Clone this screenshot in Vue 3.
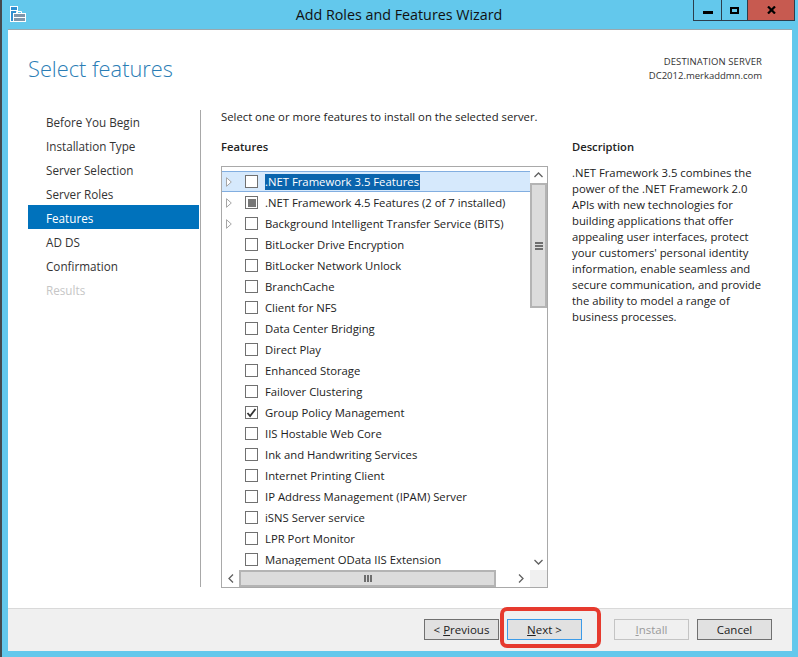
<script setup>
const steps = [
  { label: 'Before You Begin' },
  { label: 'Installation Type' },
  { label: 'Server Selection' },
  { label: 'Server Roles' },
  { label: 'Features', active: true },
  { label: 'AD DS' },
  { label: 'Confirmation' },
  { label: 'Results', disabled: true }
]
const features = [
  { label: '.NET Framework 3.5 Features', expand: true, selected: true },
  { label: '.NET Framework 4.5 Features (2 of 7 installed)', expand: true, state: 'partial' },
  { label: 'Background Intelligent Transfer Service (BITS)', expand: true },
  { label: 'BitLocker Drive Encryption' },
  { label: 'BitLocker Network Unlock' },
  { label: 'BranchCache' },
  { label: 'Client for NFS' },
  { label: 'Data Center Bridging' },
  { label: 'Direct Play' },
  { label: 'Enhanced Storage' },
  { label: 'Failover Clustering' },
  { label: 'Group Policy Management', state: 'checked' },
  { label: 'IIS Hostable Web Core' },
  { label: 'Ink and Handwriting Services' },
  { label: 'Internet Printing Client' },
  { label: 'IP Address Management (IPAM) Server' },
  { label: 'iSNS Server service' },
  { label: 'LPR Port Monitor' },
  { label: 'Management OData IIS Extension' }
]
const description = [
  '.NET Framework 3.5 combines the',
  'power of the .NET Framework 2.0',
  'APIs with new technologies for',
  'building applications that offer',
  'appealing user interfaces, protect',
  "your customers' personal identity",
  'information, enable seamless and',
  'secure communication, and provide',
  'the ability to model a range of',
  'business processes.'
]
</script>

<template>
  <div class="window">
    <header class="titlebar">
      <div class="app-icon">
        <svg width="16" height="16" viewBox="0 0 16 16">
          <rect x="0.5" y="0.5" width="7" height="15" fill="#2f8fd0" stroke="#fff" />
          <path d="M0.5 4.5h7" stroke="#fff" />
          <path d="M6.5 7.5V5.5h5v2" fill="none" stroke="#fff" />
          <rect x="3.5" y="7.5" width="12" height="8" fill="#7e96ab" stroke="#fff" />
          <path d="M3.5 11.5h12" stroke="#fff" />
        </svg>
      </div>
      <div class="title">Add Roles and Features Wizard</div>
      <div class="controls">
        <div class="ctl ctl-min"><span class="min-glyph"></span></div>
        <div class="ctl ctl-max"><span class="max-glyph"></span></div>
        <div class="ctl ctl-close">
          <svg width="9" height="8" viewBox="0 0 9 8"><path d="M1 .5l7 7M8 .5l-7 7" stroke="#000" stroke-width="2.2" /></svg>
        </div>
      </div>
    </header>

    <div class="client">
      <div class="body">
        <div class="head">
          <h1>Select features</h1>
          <div class="dest">
            <div class="dest-caption">DESTINATION SERVER</div>
            <div>DC2012.merkaddmn.com</div>
          </div>
        </div>

        <div class="columns">
          <nav class="steps">
            <div
              v-for="s in steps"
              :key="s.label"
              class="step"
              :class="{ active: s.active, disabled: s.disabled }"
            >{{ s.label }}</div>
          </nav>

          <main class="main">
            <p class="intro">Select one or more features to install on the selected server.</p>
            <div class="panes">
              <section class="features">
                <h2>Features</h2>
                <div class="listbox">
                  <div class="list-top">
                    <div class="list-wrap">
                      <div class="list">
                        <div
                          v-for="f in features"
                          :key="f.label"
                          class="row"
                          :class="{ selected: f.selected }"
                        >
                          <span class="arrow">
                            <svg v-if="f.expand" width="6" height="10" viewBox="0 0 6 10"><path d="M.5.7L5.3 5 .5 9.3z" fill="#fff" stroke="#a6a6a6" /></svg>
                          </span>
                          <span class="check" :class="f.state">
                            <svg v-if="f.state === 'checked'" width="11" height="10" viewBox="0 0 11 10"><path d="M1.5 5l2.6 3L9.5 1" fill="none" stroke="#333" stroke-width="1.8" /></svg>
                          </span>
                          <span class="label">{{ f.label }}</span>
                        </div>
                      </div>
                    </div>
                    <div class="vscroll">
                      <div class="sbtn-v">
                        <svg width="9" height="6" viewBox="0 0 9 6"><path d="M.5 5L4.5 1l4 4" fill="none" stroke="#606060" stroke-width="1.3" /></svg>
                      </div>
                      <div class="vthumb"><span class="grip-h"></span></div>
                      <div class="vtrack"></div>
                      <div class="sbtn-v">
                        <svg width="9" height="6" viewBox="0 0 9 6"><path d="M.5 1l4 4 4-4" fill="none" stroke="#606060" stroke-width="1.3" /></svg>
                      </div>
                    </div>
                  </div>
                  <div class="hscroll">
                    <div class="sbtn-h">
                      <svg width="6" height="9" viewBox="0 0 6 9"><path d="M5 .5l-4 4 4 4" fill="none" stroke="#606060" stroke-width="1.3" /></svg>
                    </div>
                    <div class="hthumb"><span class="grip-v"></span></div>
                    <div class="htrack"></div>
                    <div class="sbtn-h sbtn-right">
                      <svg width="6" height="9" viewBox="0 0 6 9"><path d="M1 .5l4 4-4 4" fill="none" stroke="#606060" stroke-width="1.3" /></svg>
                    </div>
                    <div class="corner"></div>
                  </div>
                </div>
              </section>
              <aside class="description">
                <h2>Description</h2>
                <div class="desc-text">
                  <div v-for="line in description" :key="line">{{ line }}</div>
                </div>
              </aside>
            </div>
          </main>
        </div>
      </div>

      <footer class="footer">
        <button class="btn"><span>&lt; <u>P</u>revious</span></button>
        <button class="btn btn-next"><span><u>N</u>ext &gt;</span></button>
        <button class="btn btn-install" disabled><span><u>I</u>nstall</span></button>
        <button class="btn"><span>Cancel</span></button>
        <div class="callout"></div>
      </footer>
    </div>
  </div>
</template>

<style scoped>
.window {
  width: 798px;
  height: 657px;
  box-sizing: border-box;
  background: #63c8ec;
  border-left: 2px solid #45494d;
  padding: 0 6px 6px 6px;
  display: flex;
  flex-direction: column;
  font-family: "Open Sans", "Noto Sans", sans-serif;
  font-size: 11.3px;
  color: #222;
  overflow: hidden;
}
.titlebar {
  height: 30px;
  flex: none;
  position: relative;
  display: flex;
  justify-content: center;
  margin-left: -8px;
  margin-right: -6px;
}
.app-icon {
  position: absolute;
  left: 10px;
  top: 6px;
  width: 16px;
  height: 16px;
}
.title {
  font-size: 14.3px;
  line-height: 30px;
  color: #111;
}
.controls {
  position: absolute;
  right: 3px;
  top: 0;
  display: flex;
  height: 21px;
  border: 1px solid #2c3e4c;
  border-top: none;
  box-sizing: border-box;
}
.ctl {
  display: flex;
  align-items: center;
  justify-content: center;
}
.ctl-min, .ctl-max {
  border-right: 1px solid #2c3e4c;
}
.ctl-min { width: 27px; }
.ctl-max { width: 25px; }
.ctl-close { width: 46px; background: #c75a50; }
.min-glyph {
  width: 10px;
  height: 3px;
  background: #000;
  margin-top: 5px;
}
.max-glyph {
  width: 9px;
  height: 7px;
  box-sizing: border-box;
  border: 2px solid #000;
  margin-top: 1px;
}
.client {
  flex: 1;
  min-height: 0;
  background: #fff;
  border-top: 1px solid #9aa8ae;
  margin-top: -1px;
  display: flex;
  flex-direction: column;
}
.body {
  flex: 1;
  min-height: 0;
  padding: 0 30px 0 20px;
}
.head {
  height: 79px;
  display: flex;
  justify-content: space-between;
  align-items: flex-start;
}
h1 {
  margin: 21px 0 0;
  font-size: 21.8px;
  font-weight: 300;
  line-height: 36px;
  color: #2a7db5;
}
.dest {
  margin-top: 25px;
  text-align: right;
  font-size: 9.5px;
  line-height: 14px;
  color: #333;
}
.dest-caption {
  letter-spacing: 0.1px;
}
.columns {
  display: flex;
}
.steps {
  width: 171px;
  flex: none;
  font-size: 11.7px;
}
.step {
  height: 24px;
  line-height: 26px;
  padding-left: 18px;
  color: #333;
}
.step.active {
  background: #0072bc;
  color: #fff;
}
.step.disabled {
  color: #c6c6c6;
}
.main {
  margin: 1px 0 0 1px;
  padding-left: 20px;
  border-left: 1px solid #a8a8a8;
  height: 477px;
  flex: 1;
  min-width: 0;
}
.intro {
  margin: 0;
  height: 27px;
  line-height: 14px;
}
h2 {
  margin: 0;
  font-size: 11.2px;
  font-weight: 600;
  line-height: 20px;
  height: 19px;
  color: #222;
}
.panes {
  display: flex;
}
.features {
  width: 327px;
  flex: none;
}
.listbox {
  margin-top: 10px;
  height: 422px;
  border: 1px solid #a9a9a9;
  box-sizing: border-box;
  display: flex;
  flex-direction: column;
}
.list-top {
  flex: 1;
  min-height: 0;
  display: flex;
}
.list-wrap {
  flex: 1;
  min-width: 0;
  padding: 4px 0 4px;
}
.list {
  height: 100%;
  overflow: hidden;
}
.row {
  height: 21px;
  box-sizing: border-box;
  display: flex;
  align-items: center;
  white-space: nowrap;
}
.row.selected {
  background: #d6e9fc;
  border-top: 1px solid #82aee0;
  border-bottom: 1px solid #82aee0;
}
.row.selected .label {
  background: #0a64ad;
  color: #fff;
}
.arrow {
  width: 23px;
  padding-left: 4px;
  box-sizing: border-box;
  display: flex;
  flex: none;
}
.check {
  width: 13px;
  height: 13px;
  border: 1px solid #707070;
  background: #fff;
  flex: none;
  margin-right: 7px;
  display: flex;
  align-items: center;
  justify-content: center;
  box-sizing: border-box;
}
.check.partial::after {
  content: "";
  width: 8px;
  height: 8px;
  background: #777;
}
.label {
  line-height: 16px;
  padding-right: 1px;
}
.vscroll {
  width: 17px;
  display: flex;
  flex-direction: column;
  flex: none;
  box-sizing: border-box;
}
.sbtn-v {
  height: 16px;
  display: flex;
  align-items: center;
  justify-content: center;
  flex: none;
}
.vthumb {
  height: 125px;
  flex: none;
  box-sizing: border-box;
  background: #dcdcdc;
  border: 2px solid #b4b4b4;
  display: flex;
  align-items: center;
  justify-content: center;
}
.vtrack {
  flex: 1;
}
.grip-h {
  width: 8px;
  height: 8px;
  background: repeating-linear-gradient(to bottom, #6e6e6e 0 2px, #dcdcdc 2px 3px);
}
.hscroll {
  height: 17px;
  flex: none;
  display: flex;
}
.sbtn-h {
  width: 17px;
  display: flex;
  align-items: center;
  justify-content: center;
  flex: none;
}
.sbtn-right {
  width: 18px;
}
.hthumb {
  width: 257px;
  flex: none;
  background: #dcdcdc;
  border: 2px solid #b4b4b4;
  display: flex;
  align-items: center;
  justify-content: center;
  box-sizing: border-box;
}
.grip-v {
  width: 8px;
  height: 7px;
  background: repeating-linear-gradient(to right, #6e6e6e 0 2px, #dcdcdc 2px 3px);
}
.htrack {
  flex: 1;
}
.corner {
  width: 17px;
  background: #f0f0f0;
  flex: none;
}
.description {
  margin-left: 24px;
  flex: 1;
  min-width: 0;
}
.desc-text {
  margin-top: 9px;
  line-height: 16px;
  white-space: nowrap;
}
.footer {
  height: 43px;
  flex: none;
  box-sizing: border-box;
  background: #f0f0f0;
  border-top: 1px solid #d9d9d9;
  display: flex;
  align-items: flex-start;
  justify-content: flex-end;
  gap: 8px;
  padding: 10px 20px 0 0;
  position: relative;
}
.btn {
  width: 75px;
  height: 21px;
  padding: 0;
  box-sizing: border-box;
  background: #e1e1e1;
  border: 1px solid #707070;
  font: inherit;
  font-size: 11.5px;
  color: #222;
  line-height: 19px;
}
.btn u {
  text-decoration: underline;
}
.btn-next {
  border-color: #3c9be8;
}
.btn-install {
  margin-left: 24px;
  background: #f0f0f0;
  border-color: #c4c4c4;
  color: #9a9a9a;
}
.callout {
  position: absolute;
  left: 492px;
  top: -2px;
  width: 101px;
  height: 41px;
  box-sizing: border-box;
  border: 4px solid #e63a2e;
  border-radius: 7px;
}
</style>
